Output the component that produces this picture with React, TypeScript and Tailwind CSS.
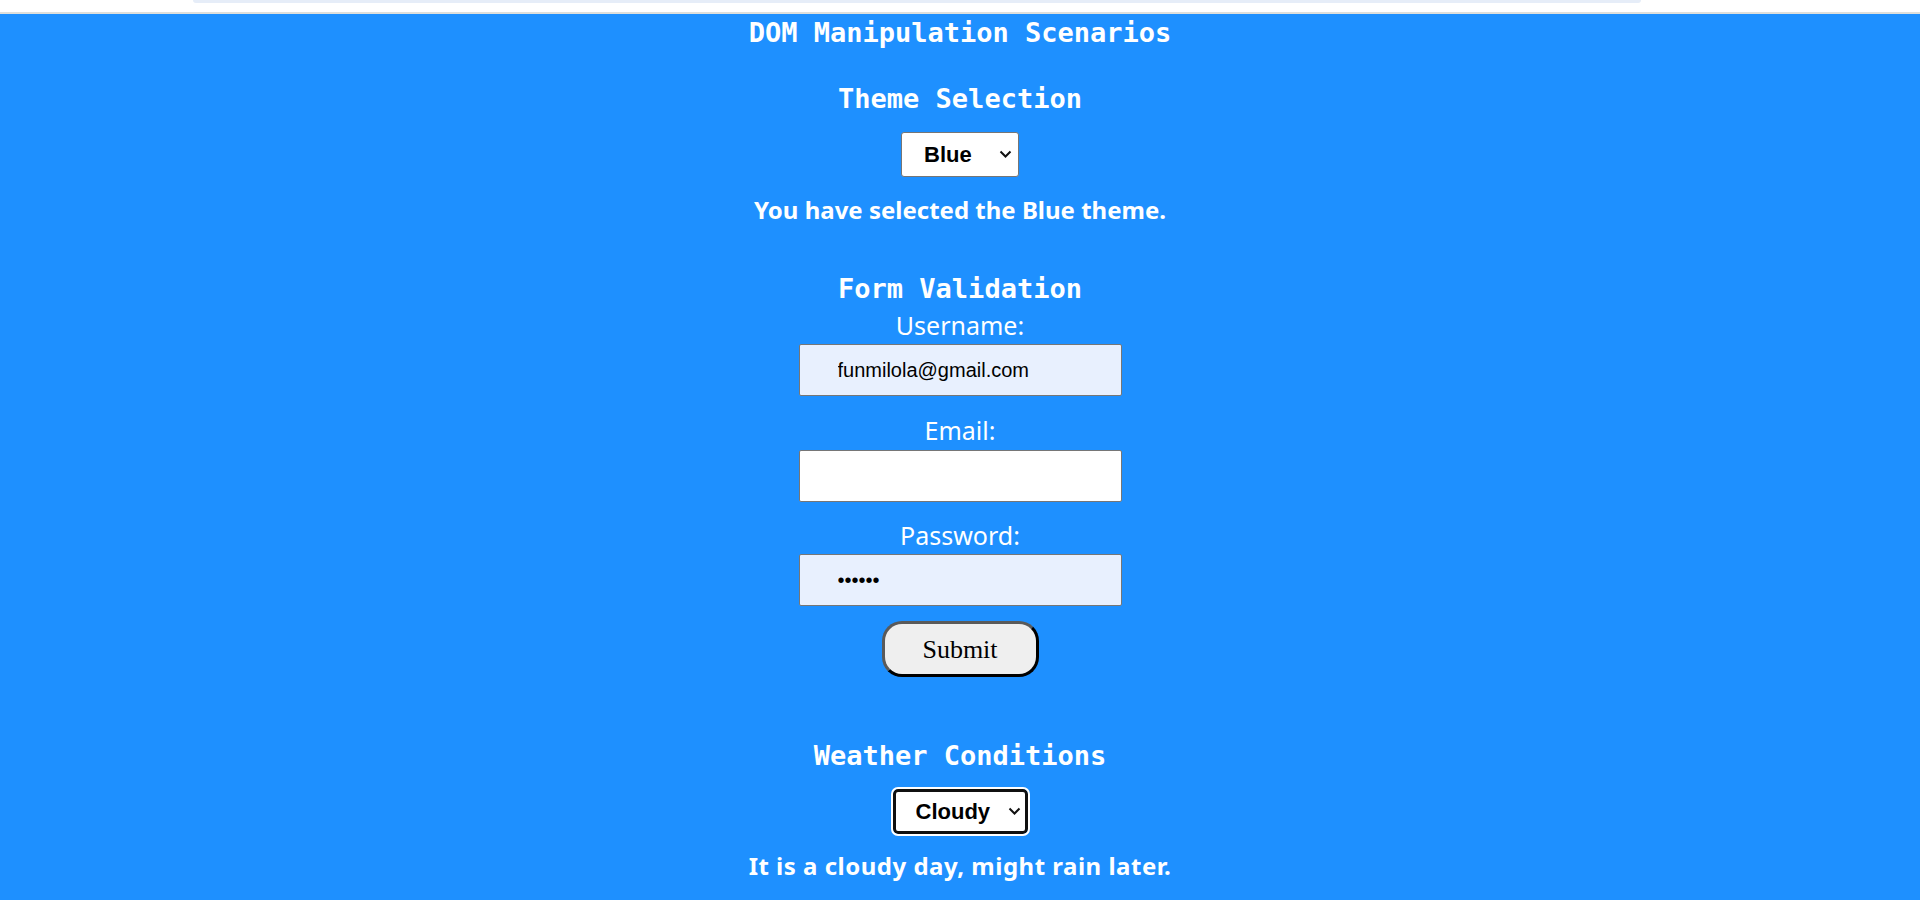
import {useState} from 'react';

const mono = "font-['DejaVu_Sans_Mono','Liberation_Mono',monospace]";
const comic = "font-['Comic_Sans_MS','Noto_Sans',sans-serif]";

function Chevron() {
  return (
    <svg width="13" height="8" viewBox="0 0 13 8" fill="none" className="pointer-events-none">
      <path d="M1.5 1.5l5 5 5-5" stroke="#111" strokeWidth="2" />
    </svg>
  );
}

export default function App() {
  const [theme, setTheme] = useState('Blue');
  const [weather, setWeather] = useState('Cloudy');

  return (
    <div className="min-h-[900px] flex flex-col bg-white">
      {/* browser chrome remnant */}
      <div className="h-[12px] bg-white flex">
        <div className="ml-[193px] w-[1448px] h-[3px] bg-[#e6edf8] rounded-b-[10px]" />
      </div>
      <div className="h-[2px] bg-[#dedfdc]" />

      <main className="flex-1 bg-[#1e90ff] text-white flex flex-col items-center pt-[3px] text-center">
        <h1 className={`${mono} text-[27px] leading-[32px] font-bold`}>DOM Manipulation Scenarios</h1>

        {/* Theme */}
        <h2 className={`${mono} mt-[34px] text-[27px] leading-[32px] font-bold`}>Theme Selection</h2>
        <div className="mt-[17px] relative flex items-center">
          <select
            value={theme}
            onChange={(e) => setTheme(e.target.value)}
            className="appearance-none w-[118px] h-[45px] bg-white border border-[#767676] rounded-[3px] pl-[22px] text-left text-black text-[22px] font-bold font-['Liberation_Sans',Arial,sans-serif]"
          >
            <option>Blue</option>
            <option>Green</option>
            <option>Dark</option>
          </select>
          <span className="absolute right-[7px] top-[18px]">
            <Chevron />
          </span>
        </div>
        <p className={`${comic} mt-[18px] text-[24px] leading-[30px] font-bold`}>
          You have selected the {theme} theme.
        </p>

        {/* Form */}
        <h2 className={`${mono} mt-[48px] text-[27px] leading-[32px] font-bold`}>Form Validation</h2>
        <form className="flex flex-col items-center" onSubmit={(e) => e.preventDefault()}>
          <label className={`${comic} mt-[5px] text-[25px] leading-[30px]`}>Username:</label>
          <input
            defaultValue="funmilola@gmail.com"
            className="mt-[4px] w-[323px] h-[52px] bg-[#e8f0fe] border border-[#767676] rounded-[2px] pl-[38px] text-black text-[20px] font-['Liberation_Sans',Arial,sans-serif] outline-none"
          />
          <label className={`${comic} mt-[19px] text-[25px] leading-[30px]`}>Email:</label>
          <input
            type="email"
            className="mt-[5px] w-[323px] h-[52px] bg-white border border-[#767676] rounded-[2px] pl-[38px] text-black text-[20px] font-['Liberation_Sans',Arial,sans-serif] outline-none"
          />
          <label className={`${comic} mt-[18px] text-[25px] leading-[30px]`}>Password:</label>
          <input
            type="password"
            defaultValue="123456"
            className="mt-[4px] w-[323px] h-[52px] bg-[#e8f0fe] border border-[#767676] rounded-[2px] pl-[38px] text-black text-[20px] font-['Liberation_Sans',Arial,sans-serif] outline-none"
          />
          <button
            type="submit"
            className="mt-[15px] w-[157px] h-[56px] bg-[#efefef] rounded-[20px] border-[3px] border-t-[#5a5a5a] border-l-[#5a5a5a] border-b-black border-r-black text-black text-[26px] font-['Liberation_Serif','Times_New_Roman',serif]"
          >
            Submit
          </button>
        </form>

        {/* Weather */}
        <h2 className={`${mono} mt-[63px] text-[27px] leading-[32px] font-bold`}>Weather Conditions</h2>
        <div className="mt-[17px] relative flex items-center">
          <select
            value={weather}
            onChange={(e) => setWeather(e.target.value)}
            className="appearance-none w-[135px] h-[45px] bg-white border-[3px] border-[#101010] rounded-[5px] outline-2 outline-white outline-offset-0 pl-[20px] text-left text-black text-[22px] font-bold font-['Liberation_Sans',Arial,sans-serif]"
          >
            <option>Sunny</option>
            <option>Cloudy</option>
            <option>Rainy</option>
          </select>
          <span className="absolute right-[7px] top-[18px]">
            <Chevron />
          </span>
        </div>
        <p className={`${comic} mt-[17px] text-[24px] leading-[30px] font-bold tracking-[0.5px]`}>
          {weather === 'Cloudy' ? 'It is a cloudy day, might rain later.' : weather === 'Sunny' ? 'It is a sunny day, enjoy the weather.' : 'It is raining, take an umbrella.'}
        </p>
      </main>
    </div>
  );
}
